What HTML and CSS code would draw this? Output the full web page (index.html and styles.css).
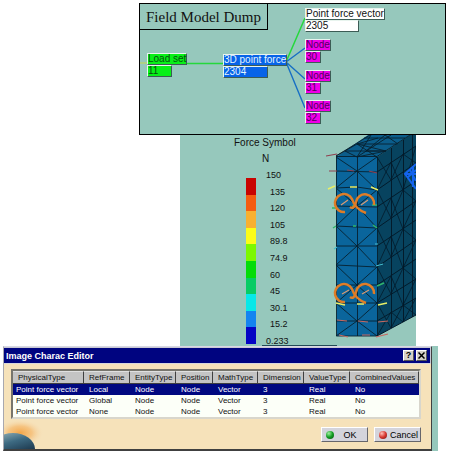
FILE: index.html
```html
<!DOCTYPE html>
<html lang="en">
<head>
<meta charset="utf-8">
<title>Field Model Dump</title>
<link rel="stylesheet" href="styles.css">
</head>
<body>
<section class="diagram">
  <h1 class="diagram-title">Field Model Dump</h1>
  <svg class="links" width="306" height="130" viewBox="140 4 306 130" fill="none" aria-hidden="true">
    <path d="M140 63h7" stroke="#c5d84c"/>
    <path d="M187 63.5h36M286 62L305 18" stroke="#25d83c" stroke-width="1.5"/>
    <path d="M286 62L305 48M286 62L305 79M286 62L305 108" stroke="#176fc4" stroke-width="1.4"/>
  </svg>
  <div class="node load"><span>Load set</span><span class="id">11</span></div>
  <div class="node force"><span>3D point force</span><span class="id">2304</span></div>
  <div class="node vector"><span>Point force vector</span><span class="id">2305</span></div>
  <div class="node mesh n30"><span>Node</span><span class="id">30</span></div>
  <div class="node mesh n31"><span>Node</span><span class="id">31</span></div>
  <div class="node mesh n32"><span>Node</span><span class="id">32</span></div>
</section>

<section class="viewer">
  <div class="legend">
    <h2>Force Symbol</h2>
    <p class="unit">N</p>
    <div class="scale">
      <div class="bar"><i class="c1"></i><i class="c2"></i><i class="c3"></i><i class="c4"></i><i class="c5"></i><i class="c6"></i><i class="c7"></i><i class="c8"></i><i class="c9"></i><i class="c10"></i></div>
      <ul class="values"><li>150</li><li>135</li><li>120</li><li>105</li><li>89.8</li><li>74.9</li><li>60</li><li>45</li><li>30.1</li><li>15.2</li><li>0.233</li></ul>
    </div>
  </div>
  <svg class="solid" width="96" height="211" viewBox="320 135 96 211" fill="none" aria-hidden="true">
    <path fill="#0b5d8b" d="M336 157L368 135H410L377 157z"/>
    <path fill="#0a659c" d="M336 156L377 157V336H337z"/>
    <path fill="#07435f" d="M377 157L410 135H416V315L377 336z"/>
    <g stroke="#07202f" stroke-width=".9">
      <path d="M336 156.500H377L410 135M336 156L370 135M357 157L391 135M345 151H386M357 144H397M364 138H405M345 151L357 157L371 135M336 156L357 144L377 157M357 157L386 151L357 144L378 138M386 151L366 151L385 135L398 144"/>
      <path d="M336.500 156V336H377.500V157M357.500 157V336"/>
      <path d="M336 171L377 172M336 188L357 187L377 190M336 206L377 207M336 226L377 228M336 246H377M336 265L377 267M336 285H377M336 303H377M336 321H377"/>
      <path d="M336 157L357 171L377 157M336 188L357 171L377 190M336 188L357 206L377 190M336 226L357 206L377 228M336 226L357 246L377 228M336 265L357 246L377 267M336 265L357 285L377 267M336 303L357 285L377 303M336 303L357 321L377 303M336 336L357 321L377 336"/>
    </g>
    <g stroke="#031b2b">
      <path d="M391.500 148V328M403.500 140V322M412.500 135V317"/>
      <path d="M377 172L416 146M377 190L416 163M377 207L416 181M377 228L416 201M377 246L416 220M377 267L416 240M377 285L416 259M377 303L416 279M377 321L416 298M377 336L416 315"/>
      <path d="M377 157L391 180L403 154L416 163M377 190L391 162L403 190L416 146M377 190L391 218L403 190L416 201M377 228L391 198L403 229L416 201M377 228L391 257L403 229L416 240M377 267L391 236L403 268L416 240M377 267L391 294L403 268L416 279M377 303L391 276L403 305L416 279M377 303L391 328L403 305L416 315M377 336L391 312L403 322L416 298" stroke-width=".8"/>
    </g>
    <g stroke-width="1.1">
      <path stroke="#8f4050" d="M326 156L337 154M329 171H337M347 170L354 171M369 171L377 173"/>
      <path stroke="#e9ee65" stroke-width="1.500" d="M328 189L335 186M350 187H357M371 187L378 190M336 303L345 305M357 304H364M378 305L387 303"/>
      <path stroke="#31b66b" stroke-width="1.500" d="M332 208H336M352 206H355M372 205H377M333 228L336 226M353 226H356M373 225L377 228M377 286L384 283"/>
      <path stroke="#46bed0" d="M334 249L337 247M375 244H378M376 266L383 264"/>
      <path stroke="#c76a62" d="M337 320L347 321M358 321L368 322M378 322L388 321M339 335L348 337M362 335H370M376 337L388 334"/>
      <path stroke="#dc9b72" d="M341 205L348 200M361 205L368 200M342 294L349 290M362 294L369 290"/>
    </g>
    <g stroke="#df7d27" stroke-width="2.500">
      <path d="M345 212A9 9 0 1 1 352 199Q355 209 366 213"/>
      <path d="M374 205A9 9 0 0 0 356 202Q354 210 350 207"/>
      <path d="M345 302A9 9 0 1 1 352 289Q355 299 366 303"/>
      <path d="M374 294A9 9 0 0 0 356 292Q354 300 350 297"/>
    </g>
    <path stroke="#1463ee" stroke-width="2" d="M416 164L405 174L416 189M406 174H416M410 170L416 181M413 166V187M416 170L408 177"/>
  </svg>
</section>

<div class="backdrop">
  <section class="dialog" aria-labelledby="dialog-title">
    <header class="titlebar">
      <h2 id="dialog-title">Image Charac Editor</h2>
      <button type="button" class="tool" aria-label="Help">?</button>
      <button type="button" class="tool" aria-label="Close"><svg width="7" height="7" viewBox="0 0 7 7" aria-hidden="true"><path d="M.5.5l6 6M6.500.5l-6 6" stroke="#000" stroke-width="1.500"/></svg></button>
    </header>
    <div class="content">
      <div class="frame">
        <table>
          <colgroup><col class="w-type"><col class="w-mid"><col class="w-mid"><col class="w-pos"><col class="w-math"><col class="w-mid"><col class="w-mid"><col></colgroup>
          <thead><tr><th>PhysicalType</th><th>RefFrame</th><th>EntityType</th><th>Position</th><th>MathType</th><th>Dimension</th><th>ValueType</th><th>CombinedValues</th></tr></thead>
          <tbody>
            <tr class="selected"><td>Point force vector</td><td>Local</td><td>Node</td><td>Node</td><td>Vector</td><td>3</td><td>Real</td><td>No</td></tr>
            <tr><td>Point force vector</td><td>Global</td><td>Node</td><td>Node</td><td>Vector</td><td>3</td><td>Real</td><td>No</td></tr>
            <tr><td>Point force vector</td><td>None</td><td>Node</td><td>Node</td><td>Vector</td><td>3</td><td>Real</td><td>No</td></tr>
          </tbody>
        </table>
      </div>
      <footer class="actions">
        <svg class="globe" width="44" height="30" viewBox="0 0 44 30" aria-hidden="true">
          <defs>
            <radialGradient id="glow"><stop offset="0" stop-color="#f3a548"/><stop offset=".5" stop-color="#f5bd75" stop-opacity=".8"/><stop offset="1" stop-color="#f6e2bf" stop-opacity="0"/></radialGradient>
            <linearGradient id="earth" x2=".4" y2="1"><stop offset="0" stop-color="#9cb7bd"/><stop offset=".4" stop-color="#3d6a82"/><stop offset="1" stop-color="#0a1c30"/></linearGradient>
          </defs>
          <ellipse cx="16" cy="14" rx="24" ry="14" fill="url(#glow)"/>
          <ellipse cx="9" cy="30" rx="22" ry="16" fill="url(#earth)"/>
        </svg>
        <button type="button" class="action"><i class="dot ok"></i><span>OK</span></button>
        <button type="button" class="action"><i class="dot cancel"></i><span>Cancel</span></button>
      </footer>
    </div>
  </section>
</div>
</body>
</html>
```
FILE: styles.css
```css
* { box-sizing: border-box; }
body {
  margin: 0;
  padding-top: 3px;
  background: #fff;
  color: #111;
  font: 10px/12px "Liberation Sans", Arial, sans-serif;
}
h1, h2, p, ul { margin: 0; padding: 0; font-weight: normal; }
h2 { font-size: 10px; }
ul { list-style: none; }

/* Model graph */
.diagram {
  position: relative;
  height: 132px;
  margin: 0 4px 0 139px;
  border: 1px solid #000;
  background: #96c8bc;
}
.diagram-title {
  width: 128px;
  padding: 4px 6px 2px;
  border: solid #000;
  border-width: 0 1px 1px 0;
  font: 15px/19px "Liberation Serif", "Times New Roman", serif;
}
.links { position: absolute; left: 0; top: 0; }
.node {
  position: absolute;
  display: flex;
  flex-direction: column;
  align-items: flex-start;
  white-space: nowrap;
}
.node span {
  height: 12px;
  border: 1px solid;
  border-color: #e8f4ee #3c5c55 #3c5c55 #e8f4ee;
  background: var(--fill);
  line-height: 10px;
}
.node .id { width: var(--id); }
.load { --fill: #08f018; --id: 25px; left: 7px; top: 49px; color: #075010; }
.force { --fill: #0864e8; --id: 45px; left: 83px; top: 50px; color: #e4f4ff; }
.vector { --fill: #fff; --id: 54px; left: 165px; top: 4px; }
.mesh { --fill: #f000e8; --id: 16px; left: 165px; color: #500060; }
.n30 { top: 35px; }
.n31 { top: 66px; }
.n32 { top: 96px; }

/* Result view */
.viewer {
  position: relative;
  display: flex;
  justify-content: space-between;
  height: 211px;
  margin: 0 34px 0 180px;
  overflow: hidden;
  background: #96c8bc;
}
.viewer::after {
  content: "";
  position: absolute;
  left: 82px;
  bottom: 0;
  width: 75px;
  border-bottom: 1px solid #234a55;
}
.solid { flex: none; }
.legend { padding: 2px 0 0 54px; white-space: nowrap; }
.unit { margin-top: 4px; padding-left: 28px; }
.scale { display: flex; margin-top: 2px; padding-left: 12px; gap: 10px; }
.bar { display: grid; grid-auto-rows: 1fr; width: 10px; height: 166px; margin-top: 11px; }
.values {
  display: flex;
  flex-direction: column;
  justify-content: space-between;
  height: 182px;
  font-size: 9px;
  line-height: 16px;
}
.values li { padding-left: 4px; }
.values li:first-child, .values li:last-child { padding-left: 0; }
.c1 { background: #c80400; }
.c2 { background: #f45c10; }
.c3 { background: #f8b030; }
.c4 { background: #fcfc18; }
.c5 { background: #7cf800; }
.c6 { background: #04dc08; }
.c7 { background: #08cc64; }
.c8 { background: #08e8e8; }
.c9 { background: #1484f0; }
.c10 { background: #0404c4; }

/* Editor dialog */
.backdrop { margin: 0 12px 0 3px; padding-right: 6px; background: #96c8bc; }
.dialog {
  border: 1px solid #404040;
  border-top-color: #d8d8e4;
  border-left-color: #a8a8b0;
  border-bottom-width: 2px;
  background: #f6e2ba;
}
.titlebar {
  display: flex;
  align-items: center;
  gap: 2px;
  height: 16px;
  padding: 0 3px 0 2px;
  border: solid #c8c8d4;
  border-width: 1px 1px 0 0;
  background: #000480;
  color: #fff;
}
.titlebar h2 { flex: 1; font-size: 9px; font-weight: bold; }
.tool {
  display: flex;
  align-items: center;
  justify-content: center;
  width: 11px;
  height: 11px;
  padding: 0;
  border: 1px solid;
  border-color: #fff #555 #555 #fff;
  background: #d4d0c8;
  color: #000;
  font: bold 9px/9px "Liberation Sans", Arial, sans-serif;
}
.content { padding: 5px 10px 0 7px; border-top: 1px solid #d8d8dc; }
.frame {
  border: 2px solid;
  border-color: #77756c #d8d6cc #d8d6cc #77756c;
  background: #fcfff8;
}
table {
  width: 100%;
  table-layout: fixed;
  border-collapse: separate;
  border-spacing: 0;
  font-size: 8px;
  line-height: 10px;
  white-space: nowrap;
}
th, td { height: 11px; padding: 0 0 0 5px; text-align: left; font-weight: normal; }
th {
  height: 13px;
  border: solid;
  border-width: 1px 1px 1px 0;
  border-color: #e0e0e0 #404040 #404040;
  background: #c4c4c4;
}
td:first-child { padding-left: 3px; }
.selected { background: #000880; color: #fff; }
.w-type { width: 71px; }
.w-mid { width: 46px; }
.w-pos { width: 37px; }
.w-math { width: 45px; }
.actions {
  position: relative;
  display: flex;
  justify-content: flex-end;
  gap: 6px;
  padding: 8px 0 7px;
}
.globe { position: absolute; left: -7px; bottom: 0; }
.action {
  display: flex;
  align-items: center;
  gap: 3px;
  width: 47px;
  height: 15px;
  padding: 0 4px;
  border: 1px solid;
  border-color: #fff #66666c #66666c #fff;
  background: #d4d4dc;
  color: #000;
  font: 9px/12px "Liberation Sans", Arial, sans-serif;
}
.action span { flex: 1; }
.dot { flex: none; width: 8px; height: 8px; border-radius: 50%; }
.ok { background: radial-gradient(circle at 35% 30%, #a0f0a0, #129c22 50%, #065010); }
.cancel { background: radial-gradient(circle at 35% 30%, #ffc0b8, #d83830 50%, #701010); }
```
